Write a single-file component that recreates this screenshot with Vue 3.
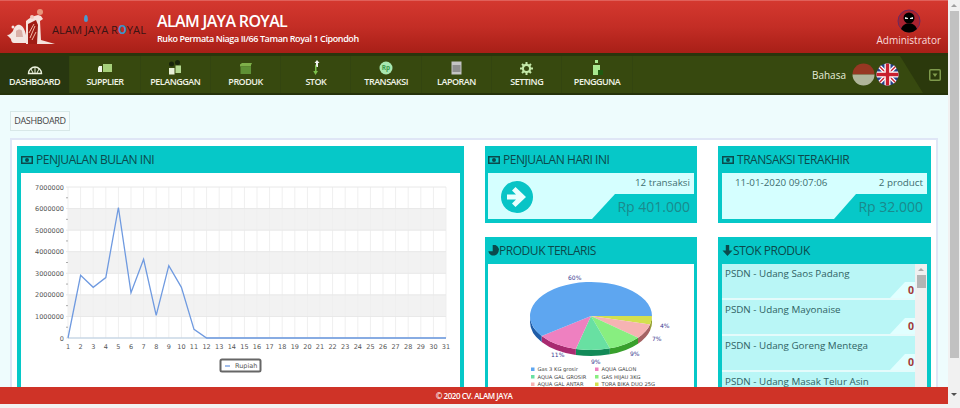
<script setup>
const values = [0, 2900000, 2350000, 2800000, 6050000, 2100000, 3650000, 1050000, 3350000, 2350000, 400000, 0, 0, 0, 0, 0, 0, 0, 0, 0, 0, 0, 0, 0, 0, 0, 0, 0, 0, 0, 0]
const plot = { left: 47, right: 425, top: 14, bottom: 165 }
const stepX = (plot.right - plot.left) / 30
const stepY = (plot.bottom - plot.top) / 7
const xAt = (i) => plot.left + i * stepX
const yAt = (v) => plot.bottom - (v / 1000000) * stepY
const ticks = [0, 1, 2, 3, 4, 5, 6, 7]
const bands = [5, 3, 1]
const linePoints = values.map((v, i) => `${xAt(i).toFixed(1)},${yAt(v).toFixed(1)}`).join(' ')

// pie is a squashed ellipse, starts at 3 o'clock and goes clockwise
const pie = { cx: 103, cy: 52, rx: 61, ry: 34, depth: 6 }
const slices = [
  { pct: 4, color: '#d3e04e', side: '#8c9a24' },
  { pct: 7, color: '#f6b3b3', side: '#a56262' },
  { pct: 9, color: '#88ee80', side: '#38a02c' },
  { pct: 9, color: '#68e0a2', side: '#128a58' },
  { pct: 11, color: '#ee80c0', side: '#a82a70' },
  { pct: 60, color: '#5ea6f0', side: '#1e5ca8' }
]
const pt = (a, dy = 0) => {
  const x = pie.cx + pie.rx * Math.cos(a)
  const y = pie.cy + pie.ry * Math.sin(a) + dy
  return `${x.toFixed(2)} ${y.toFixed(2)}`
}
let angle = 0
const pieParts = slices.map((s) => {
  const start = angle
  const end = angle + (s.pct / 100) * Math.PI * 2
  angle = end
  const big = end - start > Math.PI ? 1 : 0
  const top = `M${pie.cx} ${pie.cy} L${pt(start)} A${pie.rx} ${pie.ry} 0 ${big} 1 ${pt(end)} Z`
  let wall = ''
  if (start < Math.PI) {
    const wallEnd = Math.min(end, Math.PI)
    wall = `M${pt(start)} A${pie.rx} ${pie.ry} 0 0 1 ${pt(wallEnd)} L${pt(wallEnd, pie.depth)} A${pie.rx} ${pie.ry} 0 0 0 ${pt(start, pie.depth)} Z`
  }
  return { top, wall, color: s.color, side: s.side }
})
const pieLabels = [
  { text: '60%', x: 80, y: 16 },
  { text: '11%', x: 63, y: 93 },
  { text: '9%', x: 103, y: 100 },
  { text: '9%', x: 142, y: 92 },
  { text: '7%', x: 164, y: 77 },
  { text: '4%', x: 172, y: 64 }
]
const pieLegend = [
  { text: 'Gas 3 KG grosir', x: 43, y: 107, color: '#5ea6f0' },
  { text: 'AQUA GALON', x: 107, y: 107, color: '#ee80c0' },
  { text: 'AQUA GAL GROSIR', x: 43, y: 114.5, color: '#68e0a2' },
  { text: 'GAS HIJAU 3KG', x: 107, y: 114.5, color: '#88ee80' },
  { text: 'AQUA GAL ANTAR', x: 43, y: 122, color: '#f6b3b3' },
  { text: 'TORA BIKA DUO 25G', x: 107, y: 122, color: '#d3e04e' }
]
const stock = ['PSDN - Udang Saos Padang', 'PSDN - Udang Mayonaise', 'PSDN - Udang Goreng Mentega', 'PSDN - Udang Masak Telur Asin']
</script>

<template>
  <div class="page">
    <div class="screen">
      <header class="top">
        <svg class="logo-art" width="50" height="36" viewBox="0 0 50 36">
          <path d="M0 26c3 0 4-2 6-4 1-4 4-7 7-6 3 1 5 5 6 10l1 8H7c-2 0-3-2-3-4z" fill="#f4e6e2" />
          <path d="M9 22c2-2 5-2 6 0l1 6H9z" fill="#d9b0a8" />
          <path d="M19 12c3-3 7-5 12-6l3 1 2 3-3 2 1 19 7 2 7 2H19z" fill="#f6e2dc" />
          <path d="M21 15l8-4 2 5-1 19h-9z" fill="#a01c14" />
          <path d="M23 29l5-12M22 24l5-9M25 31l4-8" stroke="#f2b8a6" stroke-width="1" />
          <circle cx="33" cy="3" r="3" fill="#e8967c" />
          <circle cx="25" cy="8" r="2" fill="#f2c8bc" />
          <circle cx="6" cy="18" r="1.500" fill="#f4e6e2" />
        </svg>
        <div class="logo-word">
          <span class="drop drop-a"></span>
          ALAM JAYA R<span class="logo-o">O</span>YAL
        </div>
        <div class="brand">
          <div class="brand-name">ALAM JAYA ROYAL</div>
          <div class="brand-addr">Ruko Permata Niaga II/66 Taman Royal 1 Cipondoh</div>
        </div>
        <div class="user">
          <svg width="24" height="24" viewBox="0 0 24 24">
            <circle cx="12" cy="12" r="11" fill="#a82230" stroke="#6a2a60" stroke-width="1" />
            <path d="M4 20c1.500-4 4-5 6-5.500h4c2 .5 4.500 1.500 6 5.500-2.500 2.500-5 3.500-8 3.500s-5.500-1-8-3.500z" fill="#000" />
            <circle cx="12" cy="9" r="5.500" fill="#000" />
            <path d="M8 8l3 1v1H8zM16 8l-3 1v1h3z" fill="#e8e8e8" />
          </svg>
          <span>Administrator</span>
        </div>
      </header>

      <nav class="menu">
        <div class="menu-item active">
          <svg width="16" height="12" viewBox="0 0 16 12">
            <path d="M1.500 10.500a6.500 6.500 0 0 1 13 0z" fill="none" stroke="#eef4e0" stroke-width="1.400" />
            <path d="M8 4v6M4 6l2 4M12 6l-2 4" stroke="#eef4e0" stroke-width="1" />
          </svg>
          <span>DASHBOARD</span>
        </div>
        <div class="menu-item">
          <svg width="16" height="12" viewBox="0 0 16 12">
            <rect x="6" y="1" width="9" height="8" fill="#a6d07a" />
            <path d="M1 5l1-2h3v6H1z" fill="#f0f4e8" />
          </svg>
          <span>SUPPLIER</span>
        </div>
        <div class="menu-item">
          <svg width="16" height="15" viewBox="0 0 16 15">
            <circle cx="4.500" cy="4" r="2.500" fill="#18240a" />
            <circle cx="10.500" cy="2.500" r="2.500" fill="#18240a" />
            <rect x="2" y="8" width="5.500" height="6.500" fill="#e8f0d8" />
            <rect x="8.500" y="5.500" width="5.500" height="7.500" fill="#b4d890" />
          </svg>
          <span>PELANGGAN</span>
        </div>
        <div class="menu-item">
          <svg width="14" height="13" viewBox="0 0 14 13">
            <path d="M1 2.500L3 1h10l-1 2v1.500H1z" fill="#7eb04a" />
            <path d="M1.500 4.500h10.500v7.500H1.500z" fill="#5f9236" />
          </svg>
          <span>PRODUK</span>
        </div>
        <div class="menu-item">
          <svg width="10" height="15" viewBox="0 0 10 15">
            <path d="M6 0l2.500 3H7v4H5V3H3.500z" fill="#f2f2f2" />
            <path d="M4 4v7H2.200L4.500 15 7 11H5.500V6z" fill="#7cc04c" />
          </svg>
          <span>STOK</span>
        </div>
        <div class="menu-item">
          <svg width="14" height="14" viewBox="0 0 14 14">
            <circle cx="7" cy="7" r="6.500" fill="#a8e8b0" />
            <text x="7" y="9.300" class="rp-glyph" text-anchor="middle">Rp</text>
          </svg>
          <span>TRANSAKSI</span>
        </div>
        <div class="menu-item">
          <svg width="11" height="14" viewBox="0 0 11 14">
            <rect x="0.500" y="0.500" width="10" height="13" fill="#c4c4c4" />
            <rect x="1.500" y="4" width="8" height="7" fill="#8f8f8f" />
          </svg>
          <span>LAPORAN</span>
        </div>
        <div class="menu-item">
          <svg width="13" height="13" viewBox="0 0 13 13">
            <circle cx="6.500" cy="6.500" r="3.600" fill="none" stroke="#c4e8a8" stroke-width="2.200" />
            <path d="M6.500 0v2.500M6.500 10.500V13M0 6.500h2.500M10.500 6.500H13M2 2l1.800 1.800M9.200 9.200L11 11M11 2L9.200 3.800M3.800 9.200L2 11" stroke="#c4e8a8" stroke-width="2" />
          </svg>
          <span>SETTING</span>
        </div>
        <div class="menu-item">
          <svg width="11" height="15" viewBox="0 0 11 15">
            <rect x="3" y="0" width="3" height="3" fill="#a8e890" />
            <path d="M1 5h7v10H1z" fill="#a8e890" />
            <rect x="6" y="10" width="5" height="5" fill="#1f5a10" />
          </svg>
          <span>PENGGUNA</span>
        </div>
        <div class="lang">
          <span class="lang-label">Bahasa</span>
          <svg class="flag dim" width="23" height="23" viewBox="0 0 23 23">
            <clipPath id="flag-id"><circle cx="11.500" cy="11.500" r="11" /></clipPath>
            <g clip-path="url(#flag-id)">
              <rect width="23" height="11.500" fill="#a83426" />
              <rect y="11.500" width="23" height="11.500" fill="#c6c8b4" />
            </g>
          </svg>
          <svg class="flag" width="23" height="23" viewBox="0 0 23 23">
            <clipPath id="flag-uk"><circle cx="11.500" cy="11.500" r="11" /></clipPath>
            <g clip-path="url(#flag-uk)">
              <rect width="23" height="23" fill="#27408b" />
              <path d="M0 0L23 23M23 0L0 23" stroke="#fff" stroke-width="4" />
              <path d="M0 0L23 23M23 0L0 23" stroke="#c8202f" stroke-width="1.400" />
              <path d="M11.500 0V23M0 11.500H23" stroke="#fff" stroke-width="6" />
              <path d="M11.500 0V23M0 11.500H23" stroke="#c8202f" stroke-width="3.400" />
            </g>
          </svg>
        </div>
        <div class="menu-end">
          <svg width="12" height="12" viewBox="0 0 12 12">
            <rect x="0.750" y="0.750" width="10.500" height="10.500" rx="1" fill="none" stroke="#7f9a4c" stroke-width="1.500" />
            <path d="M3.500 4.500h5L6 8z" fill="#7f9a4c" />
          </svg>
        </div>
      </nav>

      <main class="content">
        <div class="crumb">DASHBOARD</div>
        <div class="board">
          <section class="panel panel-wide">
            <h3 class="panel-title">
              <svg class="money" width="12" height="8" viewBox="0 0 12 8">
                <path fill-rule="evenodd" d="M0 0h12v8H0zM1.500 1.500v5h9v-5zM6 2a2 2 0 1 1 0 4 2 2 0 0 1 0-4z" fill="#0b4a4c" />
              </svg>
              PENJUALAN BULAN INI
            </h3>
            <div class="chart-body">
              <svg width="439" height="214" viewBox="0 0 439 214">
                <rect v-for="b in bands" :key="b" :x="plot.left" :y="yAt((b + 1) * 1000000)" :width="plot.right - plot.left" :height="stepY" fill="#f2f2f2" />
                <line v-for="(v, i) in values" :key="'g' + i" :x1="xAt(i)" :x2="xAt(i)" :y1="plot.top" :y2="plot.bottom" stroke="#efefef" />
                <line v-for="t in ticks" :key="'h' + t" :x1="plot.left - 2" :x2="plot.right" :y1="yAt(t * 1000000)" :y2="yAt(t * 1000000)" stroke="#e8e8e8" />
                <line :x1="plot.left" :x2="plot.right" :y1="plot.bottom" :y2="plot.bottom" stroke="#b9cfe4" />
                <line v-for="t in ticks.slice(0, 7)" :key="'m' + t" :x1="plot.left - 2" :x2="plot.left" :y1="yAt((t + 0.5) * 1000000)" :y2="yAt((t + 0.5) * 1000000)" stroke="#aaa" />
                <text v-for="t in ticks" :key="'y' + t" :x="plot.left - 4" :y="yAt(t * 1000000) + 2.500" class="axis" text-anchor="end">{{ t * 1000000 }}</text>
                <text v-for="(v, i) in values" :key="'x' + i" :x="xAt(i)" :y="plot.bottom + 11" class="axis" text-anchor="middle">{{ i + 1 }}</text>
                <polyline :points="linePoints" fill="none" stroke="#6f9ae0" stroke-width="1.300" />
                <rect x="199.500" y="186.500" width="40" height="12" rx="1.500" fill="#fff" stroke="#666" stroke-width="2" />
                <line x1="204" x2="209" y1="193" y2="193" stroke="#6f9ae0" stroke-width="1.300" />
                <text x="214" y="194.500" class="axis">Rupiah</text>
              </svg>
            </div>
          </section>

          <section class="panel">
            <h3 class="panel-title">
              <svg class="money" width="12" height="8" viewBox="0 0 12 8">
                <path fill-rule="evenodd" d="M0 0h12v8H0zM1.500 1.500v5h9v-5zM6 2a2 2 0 1 1 0 4 2 2 0 0 1 0-4z" fill="#0b4a4c" />
              </svg>
              PENJUALAN HARI INI
            </h3>
            <div class="stat">
              <div class="stat-row stat-row-arrow">
                <svg class="go" width="32" height="32" viewBox="0 0 32 32">
                  <circle cx="16" cy="16" r="16" fill="#08c4c6" />
                  <path d="M6 13.500h9l-4-4 3.500-3.500L25 16 14.500 26 11 22.500l4-4H6z" fill="#eafffe" />
                </svg>
                <span class="stat-note">12 transaksi</span>
              </div>
              <div class="stat-money">Rp 401.000</div>
            </div>
          </section>

          <section class="panel panel-right">
            <h3 class="panel-title">
              <svg class="money" width="12" height="8" viewBox="0 0 12 8">
                <path fill-rule="evenodd" d="M0 0h12v8H0zM1.500 1.500v5h9v-5zM6 2a2 2 0 1 1 0 4 2 2 0 0 1 0-4z" fill="#0b4a4c" />
              </svg>
              TRANSAKSI TERAKHIR
            </h3>
            <div class="stat">
              <div class="stat-row">
                <span class="stat-date">11-01-2020 09:07:06</span>
                <span class="stat-note">2 product</span>
              </div>
              <div class="stat-money stat-money-short">Rp 32.000</div>
            </div>
          </section>

          <section class="panel panel-low">
            <h3 class="panel-title title-tight">
              <svg width="11" height="11" viewBox="0 0 11 11">
                <path d="M4.700 0v6.300H0.300A5.300 5.300 0 1 0 4.700 0z" fill="#0b4a4c" />
                <path d="M5.800 0a5 5 0 0 1 5 5H5.800z" fill="#0b4a4c" />
              </svg>
              PRODUK TERLARIS
            </h3>
            <div class="pie-body">
              <svg width="206" height="130" viewBox="0 0 206 130">
                <path v-for="(p, i) in pieParts" v-show="p.wall" :key="'w' + i" :d="p.wall" :fill="p.side" />
                <path v-for="(p, i) in pieParts" :key="'t' + i" :d="p.top" :fill="p.color" />
                <text v-for="(l, i) in pieLabels" :key="'l' + i" :x="l.x" :y="l.y" class="pie-label">{{ l.text }}</text>
                <g v-for="item in pieLegend" :key="item.text">
                  <rect :x="item.x" :y="item.y - 3.500" width="3.500" height="3.500" :fill="item.color" />
                  <text :x="item.x + 6.500" :y="item.y" class="pie-key">{{ item.text }}</text>
                </g>
              </svg>
            </div>
          </section>

          <section class="panel panel-low panel-right">
            <h3 class="panel-title title-tight">
              <svg width="11" height="11" viewBox="0 0 11 11">
                <path d="M3.800 0h3.400v5.500h3.300L5.500 11 .5 5.500h3.300z" fill="#0b4a4c" />
              </svg>
              STOK PRODUK
            </h3>
            <div class="stock">
              <div class="stock-list">
                <div v-for="name in stock" :key="name" class="stock-item">
                  <div class="stock-name">{{ name }}</div>
                  <div class="stock-qty">0</div>
                </div>
              </div>
              <div class="stock-bar">
                <span class="bar-up"></span>
                <span class="bar-thumb"></span>
              </div>
            </div>
          </section>
        </div>
      </main>

      <footer class="foot">© 2020 CV. ALAM JAYA</footer>
      <div class="foot-gap"></div>
    </div>

    <aside class="rail">
      <span class="rail-up"></span>
      <span class="rail-thumb"></span>
      <span class="rail-down"></span>
    </aside>
  </div>
</template>

<style>
html, body {
  margin: 0;
  overflow: hidden;
}
</style>

<style scoped>
.page {
  display: flex;
  width: 960px;
  height: 408px;
  overflow: hidden;
  font-family: "Open Sans", "Liberation Sans", sans-serif;
  background: #eefcfd;
}

.screen {
  flex: 1;
  min-width: 0;
  display: flex;
  flex-direction: column;
}

/* header */
.top {
  height: 53px;
  flex: none;
  display: flex;
  align-items: flex-start;
  position: relative;
  background: linear-gradient(#d4382f, #c32d25 50%, #a81f17);
  border-top: 1px solid #e0605a;
  box-sizing: border-box;
}

.logo-art {
  margin: 8px 0 0 7px;
  flex: none;
}

.logo-word {
  position: relative;
  margin: 22px 0 0 -5px;
  width: 105px;
  font-size: 11.500px;
  line-height: 14px;
  color: #3a1414;
  white-space: nowrap;
  transform: scaleX(0.97);
  transform-origin: left;
}

.logo-o {
  color: #3d90c8;
  font-weight: 700;
}

.drop {
  position: absolute;
  left: 33px;
  top: -8px;
  width: 4px;
  height: 7px;
  border-radius: 50% 50% 50% 50% / 70% 70% 30% 30%;
  background: #4a9ad0;
}

.brand {
  margin: 9px 0 0 0;
  color: #fff;
}

.brand-name {
  font-size: 16px;
  font-weight: 600;
  line-height: 22px;
  letter-spacing: -0.650px;
}

.brand-addr {
  font-size: 9px;
  font-weight: 600;
  line-height: 14px;
  letter-spacing: -0.400px;
}

.user {
  margin-left: auto;
  margin-right: 7px;
  margin-top: 8px;
  display: flex;
  flex-direction: column;
  align-items: center;
  color: #fbdcdc;
  font-size: 10px;
  line-height: 14px;
}

/* menu */
.menu {
  height: 42px;
  flex: none;
  box-sizing: border-box;
  display: flex;
  background: #37490f;
  border-top: 3px solid #2a350c;
  border-bottom: 2px solid #25320a;
}

.menu-item {
  width: 70.300px;
  box-sizing: border-box;
  display: flex;
  flex-direction: column;
  align-items: center;
  justify-content: flex-end;
  gap: 1px;
  padding-bottom: 5px;
  border-right: 1px solid #334510;
  color: #f0f4e6;
  font-size: 9px;
  font-weight: 600;
  line-height: 12px;
  letter-spacing: -0.500px;
}

.menu-item.active {
  background: #283710;
}

.rp-glyph {
  font-size: 6.500px;
  font-weight: 700;
  fill: #3f9a4c;
  letter-spacing: 0;
}

.lang {
  margin-left: auto;
  display: flex;
  align-items: center;
  gap: 1px;
  color: #e6eeda;
  font-size: 10px;
}

.lang-label {
  margin-right: 5px;
}

.flag.dim {
  opacity: 0.85;
}

.menu-end {
  width: 48px;
  margin-left: 1px;
  display: flex;
  align-items: center;
  justify-content: flex-end;
  padding-right: 7px;
  box-sizing: border-box;
  background: #2b390c;
  clip-path: polygon(0 0, 100% 0, 100% 100%, 23px 100%);
}

/* content */
.content {
  flex: 1;
  min-height: 0;
  overflow: hidden;
  padding: 16px 10px 0;
}

.crumb {
  width: 60px;
  height: 20px;
  box-sizing: border-box;
  border: 1px solid #d8e8e8;
  background: #f3fbfb;
  color: #444;
  font-size: 9px;
  letter-spacing: -0.300px;
  line-height: 18px;
  text-align: center;
  margin-bottom: 7px;
}

.board {
  box-sizing: border-box;
  height: 280px;
  border: 2px solid #dfe6f6;
  background: #fff;
  padding: 6px 5px 0 5px;
  display: grid;
  grid-template-columns: 447px 212px 213px;
  grid-template-rows: 77px 170px;
  column-gap: 21px;
  row-gap: 14px;
}

.panel {
  background: #06c8c8;
  padding: 0 3px 4px;
  display: flex;
  flex-direction: column;
  min-height: 0;
  overflow: hidden;
}

.panel-wide {
  grid-row: 1 / span 2;
  padding: 0 4px;
}

.panel-right {
  padding: 0 4px 4px;
}

.panel-title {
  height: 27px;
  flex: none;
  margin: 0;
  display: flex;
  align-items: center;
  gap: 3px;
  padding-left: 0;
  color: #0b4a4c;
  font-size: 12px;
  font-weight: 500;
  letter-spacing: -0.450px;
  white-space: nowrap;
}

.title-tight {
  gap: 0;
}

.money {
  flex: none;
}

.chart-body {
  flex: 1;
  background: #fff;
}

.axis {
  font-family: "DejaVu Sans", sans-serif;
  font-size: 6.500px;
  fill: #555;
}

.stat {
  flex: 1;
  display: flex;
  flex-direction: column;
  justify-content: space-between;
  background: #d5ffff;
}

.stat-row {
  display: flex;
  align-items: flex-start;
  justify-content: space-between;
  height: 21px;
  background: #d5ffff;
  padding: 3px 4px 0 13px;
  box-sizing: border-box;
  font-size: 9.800px;
  line-height: 14px;
  color: #3d6e70;
}

.stat-row-arrow {
  height: 21px;
  overflow: visible;
}

.go {
  margin: 5px 0 0 0;
  flex: none;
  position: relative;
  z-index: 1;
}

.stat-money {
  align-self: flex-end;
  width: 102px;
  height: 25px;
  box-sizing: border-box;
  padding: 2px 4px 0 0;
  background: #06c8c8;
  clip-path: polygon(23px 0, 100% 0, 100% 100%, 0 100%);
  color: #1a8a8c;
  font-size: 14px;
  line-height: 21px;
  text-align: right;
}

.stat-money-short {
  width: 93px;
  clip-path: polygon(22px 0, 100% 0, 100% 100%, 0 100%);
}

.pie-body {
  flex: 1;
  background: #fff;
}

.pie-label {
  font-family: "DejaVu Sans", sans-serif;
  font-size: 6px;
  fill: #3a3a90;
}

.pie-key {
  font-family: "DejaVu Sans", sans-serif;
  font-size: 5.200px;
  fill: #444;
}

.stock {
  flex: 1;
  min-height: 0;
  display: flex;
  background: #f0f0f0;
}

.stock-list {
  flex: 1;
  min-width: 0;
  display: flex;
  flex-direction: column;
  gap: 2px;
  background: #e4fbfb;
}

.stock-item {
  flex: none;
  height: 34px;
  background: #b9f6f6;
  display: flex;
  flex-direction: column;
  justify-content: space-between;
}

.stock-name {
  padding: 3px 0 0 3px;
  font-size: 9.800px;
  line-height: 14px;
  color: #2f6264;
  white-space: nowrap;
}

.stock-qty {
  align-self: flex-end;
  width: 25px;
  height: 16px;
  box-sizing: border-box;
  padding-right: 1px;
  background: #e0ffff;
  clip-path: polygon(15px 0, 100% 0, 100% 100%, 0 100%);
  color: #a33a3a;
  font-size: 10.500px;
  font-weight: 700;
  line-height: 16px;
  text-align: right;
}

.stock-bar {
  width: 12px;
  flex: none;
  display: flex;
  flex-direction: column;
  align-items: center;
}

.bar-up {
  margin: 4px 0 3px;
  width: 0;
  height: 0;
  border: 3px solid transparent;
  border-top: 0;
  border-bottom-color: #aaa;
}

.bar-thumb {
  width: 9px;
  height: 13px;
  margin-top: 1px;
  background: #b4b4b4;
}

.foot {
  height: 17px;
  flex: none;
  background: #cf3327;
  color: #fff;
  font-size: 8px;
  font-weight: 600;
  letter-spacing: -0.450px;
  line-height: 17px;
  text-align: center;
}

.foot-gap {
  height: 4px;
  flex: none;
  background: #f2f2f2;
}

/* window scrollbar */
.rail {
  width: 12px;
  flex: none;
  background: #f1f1f1;
  display: flex;
  flex-direction: column;
  align-items: center;
}

.rail-up {
  margin: 4px 0 4px;
  width: 0;
  height: 0;
  border: 3px solid transparent;
  border-top: 0;
  border-bottom-color: #a0a0a0;
}

.rail-thumb {
  width: 9px;
  height: 347px;
  background: #c1c1c1;
}

.rail-down {
  margin-top: 35px;
  width: 0;
  height: 0;
  border: 3px solid transparent;
  border-bottom: 0;
  border-top-color: #505050;
}
</style>
